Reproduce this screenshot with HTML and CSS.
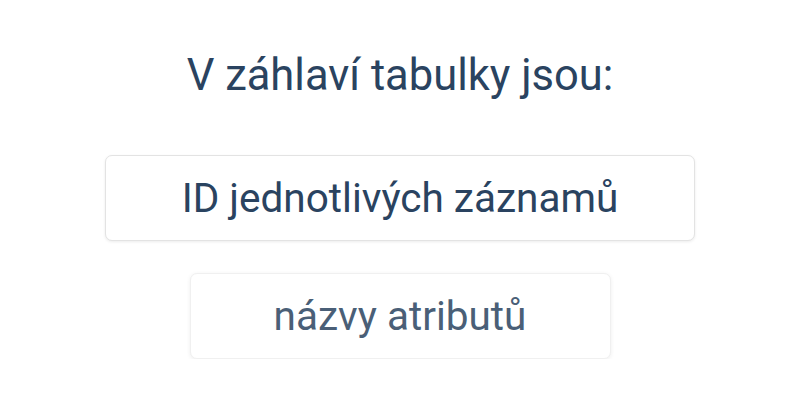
FILE: index.html
```html
<!DOCTYPE html>
<html lang="cs">
<head>
<meta charset="utf-8">
<link rel="stylesheet" href="styles.css">
</head>
<body>
<main class="quiz">
  <h1 class="question">V záhlaví tabulky jsou:</h1>
  <div class="options">
    <button class="option">ID jednotlivých záznamů</button>
    <button class="option option--muted">názvy atributů</button>
  </div>
</main>
</body>
</html>
```
FILE: styles.css
```css
html, body {
  margin: 0;
  padding: 0;
  background: #ffffff;
}

body {
  font-family: Roboto, "Noto Sans", sans-serif;
  color: #2a4360;
}

.quiz {
  display: flex;
  flex-direction: column;
  align-items: center;
  padding-top: 51px;
}

.question {
  margin: 0;
  font-size: 43.5px;
  font-weight: 400;
  line-height: 50px;
}

.options {
  display: flex;
  flex-direction: column;
  align-items: center;
  gap: 32px;
  margin-top: 54px;
}

.option {
  font-family: inherit;
  font-size: 40.5px;
  color: #2a4360;
  background: #ffffff;
  border: 1px solid #e3e3e3;
  border-radius: 7px;
  box-shadow: 0 1px 3px rgba(0, 0, 0, 0.08);
  height: 86px;
  padding: 0;
  cursor: pointer;
}

.option:first-child {
  width: 590px;
}

.option--muted {
  width: 421px;
  color: #4a5f77;
  border-color: #f0f0f0;
  box-shadow: 0 1px 4px rgba(0, 0, 0, 0.07);
}
```
